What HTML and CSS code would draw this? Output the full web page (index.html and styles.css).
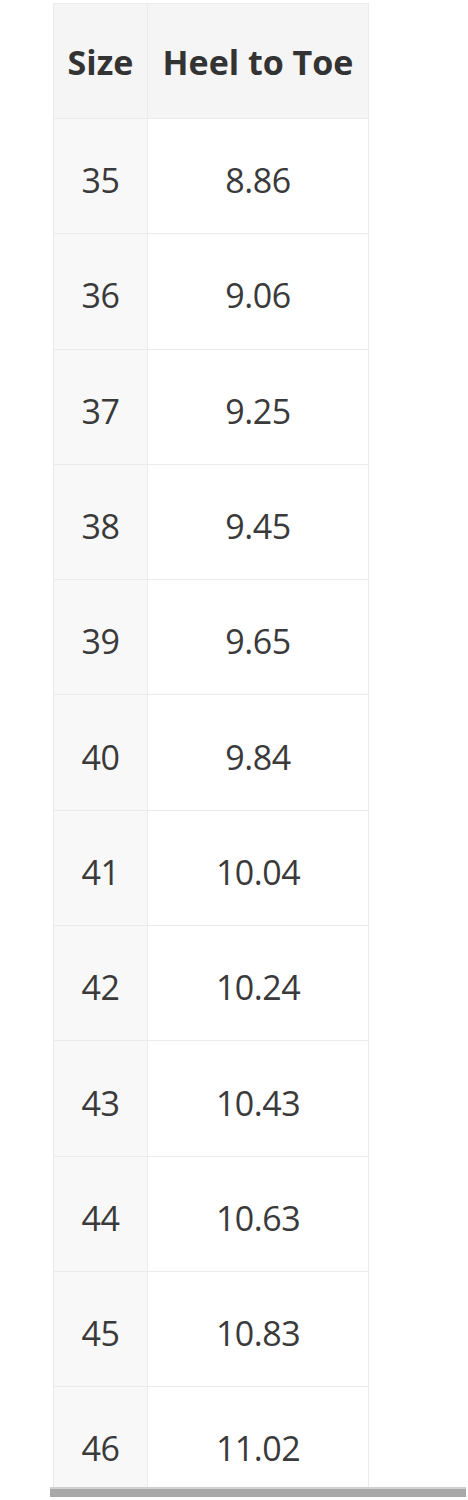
FILE: index.html
```html
<!DOCTYPE html>
<html>
<head>
<meta charset="utf-8">
<link rel="stylesheet" href="styles.css">
</head>
<body>
<div class="page">
  <div class="clip">
    <table class="chart">
      <thead>
        <tr><th class="c1">Size</th><th class="c2">Heel to Toe</th></tr>
      </thead>
      <tbody>
        <tr><td class="c1">35</td><td class="c2">8.86</td></tr>
        <tr><td class="c1">36</td><td class="c2">9.06</td></tr>
        <tr><td class="c1">37</td><td class="c2">9.25</td></tr>
        <tr><td class="c1">38</td><td class="c2">9.45</td></tr>
        <tr><td class="c1">39</td><td class="c2">9.65</td></tr>
        <tr><td class="c1">40</td><td class="c2">9.84</td></tr>
        <tr><td class="c1">41</td><td class="c2">10.04</td></tr>
        <tr><td class="c1">42</td><td class="c2">10.24</td></tr>
        <tr><td class="c1">43</td><td class="c2">10.43</td></tr>
        <tr><td class="c1">44</td><td class="c2">10.63</td></tr>
        <tr><td class="c1">45</td><td class="c2">10.83</td></tr>
        <tr><td class="c1">46</td><td class="c2">11.02</td></tr>
      </tbody>
    </table>
  </div>
  <div class="bar"></div>
</div>
</body>
</html>
```
FILE: styles.css
```css
html, body {
  margin: 0;
  padding: 0;
  background: #ffffff;
}
body {
  font-family: "Open Sans", "Liberation Sans", sans-serif;
  color: #3a3a3a;
}
.page {
  width: 468px;
  padding-top: 3px;
}
.clip {
  height: 1484px;
  overflow: hidden;
  padding-left: 53px;
}
.chart {
  border-collapse: collapse;
  table-layout: fixed;
  width: 316px;
}
.chart th, .chart td {
  border: 1px solid #ebebeb;
  text-align: center;
  vertical-align: middle;
  padding: 0;
  font-size: 34px;
}
.chart th {
  height: 115px;
  font-weight: 700;
  color: #333333;
  background: #f5f5f5;
  padding-top: 2px;
  box-sizing: border-box;
  letter-spacing: 0;
}
.chart td {
  height: 115.3px;
  font-weight: 400;
  padding-top: 8px;
  box-sizing: border-box;
  letter-spacing: -0.5px;
}
.chart .c1 {
  width: 94px;
}
.chart td.c1 {
  background: #f8f8f8;
}
.chart td.c2 {
  background: #ffffff;
}
.bar {
  margin-left: 50px;
  width: 416px;
  height: 8px;
  background: #a9a9a9;
  border-top: 2px solid #d0d0d0;
}
```
